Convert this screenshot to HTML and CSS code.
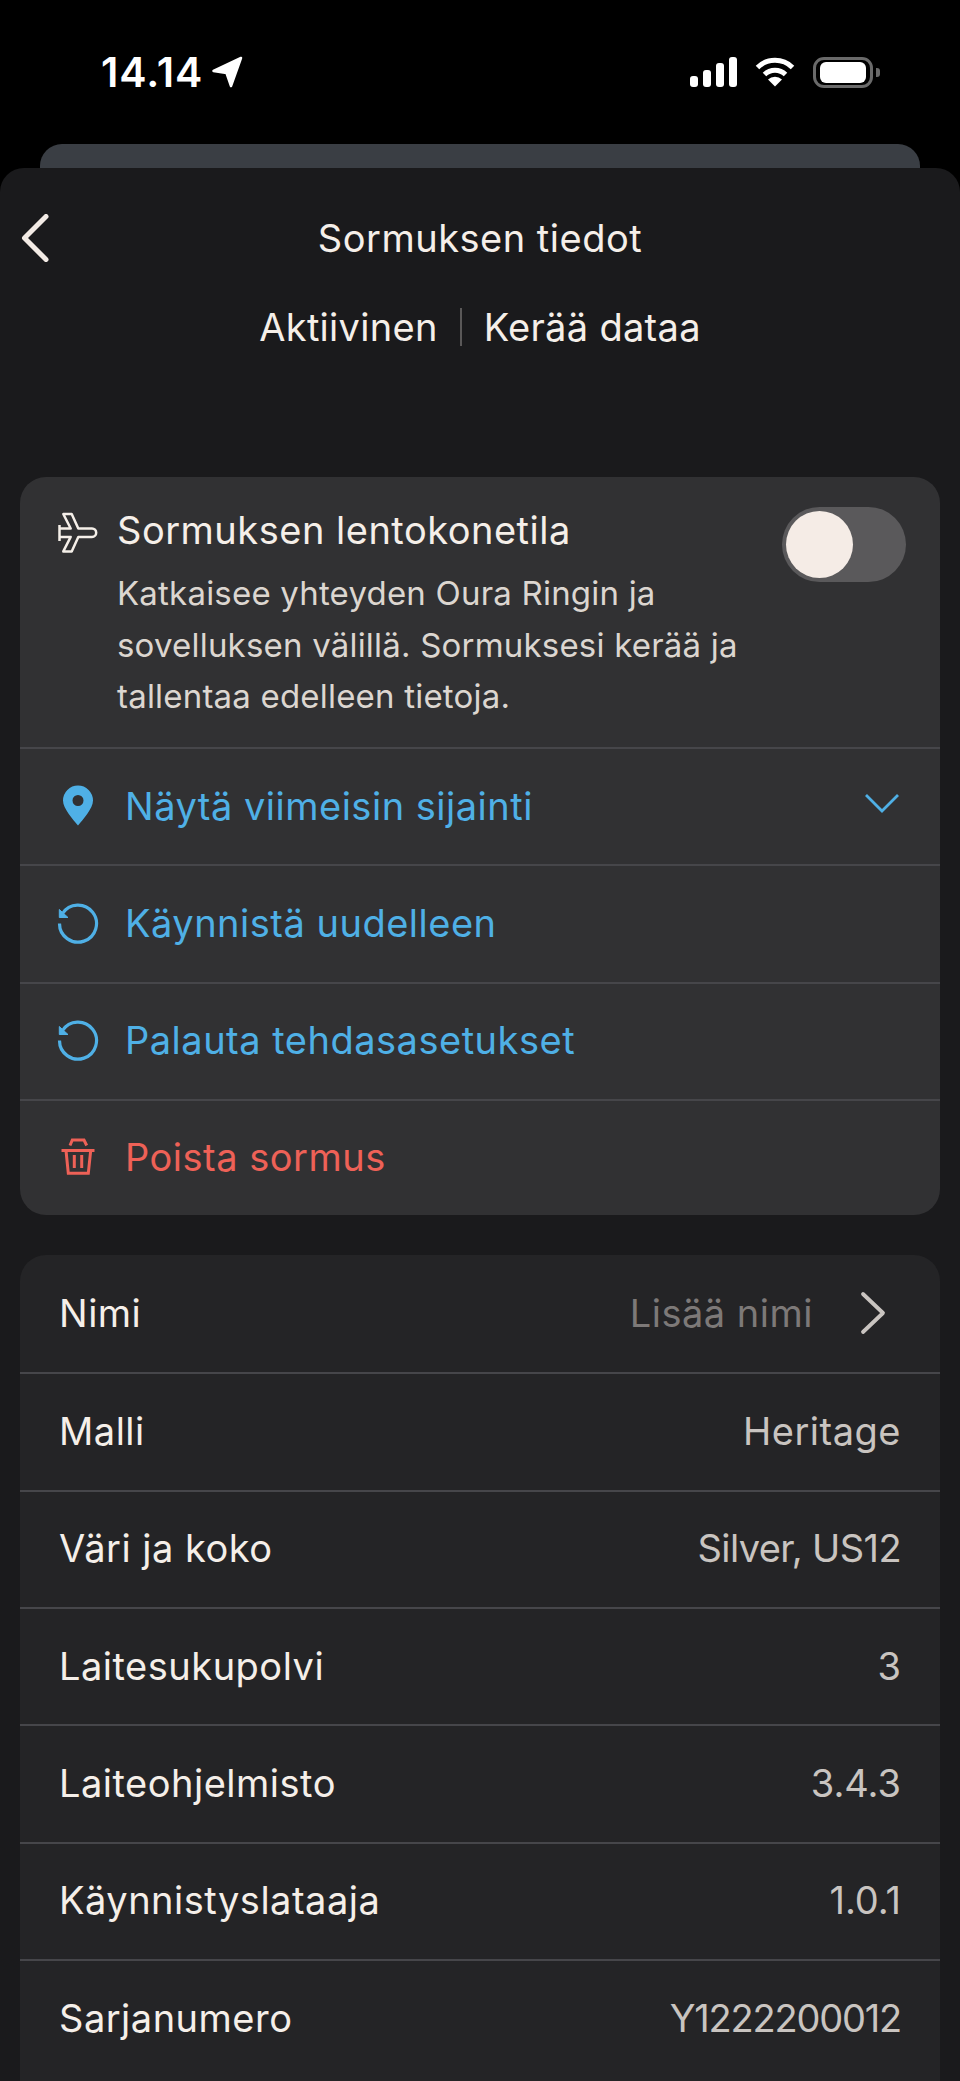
FILE: index.html
```html
<!DOCTYPE html>
<html lang="en">
<head>
    <meta charset="UTF-8">
    <meta name="viewport" content="width=device-width, initial-scale=1.0">
    <title>Sormuksen tiedot</title>
    <link rel="stylesheet" href="styles.css">
</head>
<body>
    <div class="status-bar">
        <div class="status-time">
            <span>14.14</span>
            <svg width="32" height="32" viewBox="0 0 32 32"><path d="M30 2 2.500 15 15.500 17 20 30Z" fill="#fff" stroke="#fff" stroke-width="2.500" stroke-linejoin="round"/></svg>
        </div>
        <div class="status-icons">
            <svg width="47" height="30" viewBox="0 0 47 30" fill="#fff">
                <rect x="0" y="19" width="8" height="11" rx="3"/>
                <rect x="13" y="13" width="8" height="17" rx="3"/>
                <rect x="26" y="6" width="8" height="24" rx="3"/>
                <rect x="39" y="0" width="8" height="30" rx="3"/>
            </svg>
            <svg width="40" height="30" viewBox="0 0 40 30">
                <path d="M2.500 10.500a25 25 0 0 1 35 0M9.500 17.500a15 15 0 0 1 21 0" fill="none" stroke="#fff" stroke-width="5"/>
                <path d="M20 29.500 13 22.500a10 10 0 0 1 14 0Z" fill="#fff"/>
            </svg>
            <div class="battery"><div class="battery-fill"></div></div>
        </div>
    </div>

    <div class="back-card"></div>

    <div class="sheet">
        <div class="sheet-title">
            <svg class="back-icon" width="28" height="48" viewBox="0 0 28 48"><path d="M25 2.500 3.500 24 25 45.500" fill="none" stroke="#f3ebe5" stroke-width="5" stroke-linecap="round" stroke-linejoin="round"/></svg>
            <h1>Sormuksen tiedot</h1>
        </div>
        <div class="sheet-sub">
            <span>Aktiivinen</span>
            <i class="sub-divider"></i>
            <span>Kerää dataa</span>
        </div>

        <div class="card card-actions">
            <div class="airplane">
                <svg class="plane-icon" width="42" height="42" viewBox="0 -2 42 42"><path d="M1.500 11v16M1.500 14.500H12.700L5.300 0H13.700L20.300 14.500H34a4.200 4.200 0 0 1 0 8.400H20.300L13.700 37.400H5.300L12.700 22.900H1.500" fill="none" stroke="#f5efe9" stroke-width="2.500" stroke-linejoin="round"/></svg>
                <div class="airplane-text">
                    <div class="airplane-title">Sormuksen lentokonetila</div>
                    <div class="airplane-desc">Katkaisee yhteyden Oura Ringin ja<br>sovelluksen välillä. Sormuksesi kerää ja<br>tallentaa edelleen tietoja.</div>
                </div>
                <div class="toggle"><div class="toggle-thumb"></div></div>
            </div>

            <div class="row action blue">
                <svg class="action-icon" width="44" height="44" viewBox="0 0 44 44"><path fill-rule="evenodd" d="M22 1.500a15 15 0 0 1 15 15c0 8-10 19-15 25-5-6-15-17-15-25a15 15 0 0 1 15-15Zm0 9.500a5.500 5.500 0 1 0 0 11 5.500 5.500 0 0 0 0-11Z" fill="#4fb0e6"/></svg>
                <span class="action-label">Näytä viimeisin sijainti</span>
                <svg class="expand-icon" width="36" height="20" viewBox="0 0 36 20"><path d="M2 2 18 18 34 2" fill="none" stroke="#4fb0e6" stroke-width="2.800"/></svg>
            </div>
            <div class="row action blue">
                <svg class="action-icon" width="44" height="44" viewBox="0 0 44 44"><path d="M6.500 12.500A18.500 18.500 0 1 1 3.500 22.500" fill="none" stroke="#4fb0e6" stroke-width="3.200"/><path d="M3.300 8.500V16.500H12Z" fill="#4fb0e6" stroke="#4fb0e6" stroke-linejoin="round"/></svg>
                <span class="action-label">Käynnistä uudelleen</span>
            </div>
            <div class="row action blue">
                <svg class="action-icon" width="44" height="44" viewBox="0 0 44 44"><path d="M6.500 12.500A18.500 18.500 0 1 1 3.500 22.500" fill="none" stroke="#4fb0e6" stroke-width="3.200"/><path d="M3.300 8.500V16.500H12Z" fill="#4fb0e6" stroke="#4fb0e6" stroke-linejoin="round"/></svg>
                <span class="action-label">Palauta tehdasasetukset</span>
            </div>
            <div class="row action red">
                <svg class="action-icon" width="44" height="44" viewBox="0 0 44 44"><path d="M5.500 15.500H38.500M10 15.500 12.300 38.300H32.300L34.700 15.500M18.300 20V33M25.700 20V33M14 10.500 16.300 5H28L30.700 10.500" fill="none" stroke="#ee6157" stroke-width="3"/></svg>
                <span class="action-label">Poista sormus</span>
            </div>
        </div>

        <div class="card card-info">
            <div class="row info">
                <span class="info-label">Nimi</span>
                <span class="info-value placeholder">Lisää nimi</span>
                <svg class="row-chevron" width="28" height="44" viewBox="0 0 28 44"><path d="M4 3 24 22 4 41" fill="none" stroke="#c9c4c0" stroke-width="3.800" stroke-linecap="round" stroke-linejoin="round"/></svg>
            </div>
            <div class="row info"><span class="info-label">Malli</span><span class="info-value">Heritage</span></div>
            <div class="row info"><span class="info-label">Väri ja koko</span><span class="info-value mixed">Silver, US12</span></div>
            <div class="row info"><span class="info-label">Laitesukupolvi</span><span class="info-value digits">3</span></div>
            <div class="row info"><span class="info-label">Laiteohjelmisto</span><span class="info-value digits">3.4.3</span></div>
            <div class="row info"><span class="info-label">Käynnistyslataaja</span><span class="info-value digits">1.0.1</span></div>
            <div class="row info"><span class="info-label">Sarjanumero</span><span class="info-value serial">Y1222200012</span></div>
        </div>
    </div>
</body>
</html>
```

FILE: styles.css
```css
html, body { margin: 0; height: 2081px; overflow: hidden; }
body { background-color: #000; color: #f5efe9; font-family: Inter, "Liberation Sans", sans-serif; font-size: 38px; letter-spacing: 0.5px; }

/* status bar */
.status-bar { height: 144px; padding: 0 87px 0 101px; display: flex; justify-content: space-between; align-items: center; box-sizing: border-box; }
.status-time { display: flex; align-items: center; gap: 8px; color: #fff; font-size: 41px; font-weight: 600; letter-spacing: 1px; }
.status-icons { display: flex; align-items: center; gap: 18px; }
.battery { width: 60px; height: 31px; box-sizing: border-box; border: 3px solid #6a6a6a; border-radius: 11px; padding: 2px 4px; position: relative; }
.battery::after { content: ""; position: absolute; right: -10px; top: 8px; width: 4px; height: 9px; background: #6a6a6a; border-radius: 0 3px 3px 0; }
.battery-fill { height: 100%; background: #fff; border-radius: 6px; }

.back-card { height: 24px; margin: 0 40px; background: #3a3e44; border-radius: 22px 22px 0 0; }

.sheet { background: #1a1a1c; border-radius: 24px 24px 0 0; padding: 36px 20px 0; height: 1913px; box-sizing: border-box; }
.sheet-title { height: 68px; display: flex; align-items: center; justify-content: center; position: relative; }
.sheet-title h1 { margin: 0; font-size: 38px; font-weight: 400; }
.back-icon { position: absolute; left: 1px; top: 10px; }
.sheet-sub { height: 38px; margin-top: 36px; display: flex; align-items: center; justify-content: center; gap: 22px; letter-spacing: 0.3px; }
.sub-divider { width: 2px; height: 38px; background: #5a5858; }

.card { border-radius: 26px; overflow: hidden; }
.card-actions { background: #313133; margin-top: 131px; }
.card-info { background: #242426; margin-top: 40px; height: 900px; }

.row { height: 117.33px; box-sizing: border-box; padding-bottom: 2px; display: flex; align-items: center; border-top: 2px solid #46464a; }

.airplane { height: 270px; box-sizing: border-box; padding: 33px 34px 0 38px; display: flex; align-items: flex-start; }
.plane-icon { flex: none; margin-top: 2px; }
.airplane-text { flex: 1; margin-left: 17px; }
.airplane-title { line-height: 40px; }
.airplane-desc { font-size: 33px; line-height: 51.5px; letter-spacing: 0.2px; color: #dcd6d0; margin-top: 18px; }
.toggle { flex: none; width: 124px; height: 75px; box-sizing: border-box; margin-top: -3px; padding: 4px; background: #5a595b; border-radius: 38px; }
.toggle-thumb { width: 67px; height: 67px; background: #f5ece6; border-radius: 50%; }

.action { padding: 0 40px 2px 36px; }
.card-actions .row:last-child { height: 116.3px; }
.action-icon { flex: none; }
.action-label { flex: 1; margin-left: 25px; }
.expand-icon { flex: none; margin-bottom: 6px; }
.blue { color: #4fb0e6; }
.red { color: #ee6157; }

.card-info .row:first-child { border-top: none; height: 117px; }
.info { padding: 0 39px 2px; justify-content: space-between; }
.info-value { color: #c9c4c0; }
.mixed { letter-spacing: -0.6px; }
.digits { letter-spacing: 0; }
.serial { letter-spacing: -1.2px; }
.placeholder { color: #7d7978; margin-left: auto; }
.row-chevron { margin-left: 46px; margin-right: 14px; }
```
